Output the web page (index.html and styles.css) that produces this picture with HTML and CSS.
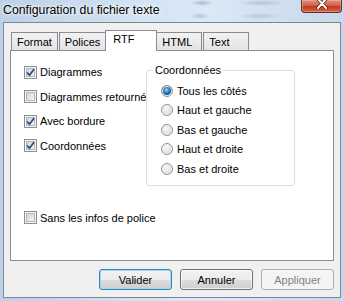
FILE: index.html
```html
<!DOCTYPE html>
<html lang="fr">
<head>
    <meta charset="UTF-8">
    <title>Configuration du fichier texte</title>
    <link rel="stylesheet" href="styles.css">
</head>
<body>
    <div class="window">
        <div class="titlebar">
            <span class="title">Configuration du fichier texte</span>
            <div class="close">
                <svg width="12" height="11" viewBox="0 0 12 11">
                    <path d="M2 1 L10 10 M10 1 L2 10" stroke="#5a1a10" stroke-width="3.4" stroke-linecap="round"/>
                    <path d="M2 1 L10 10 M10 1 L2 10" stroke="#ffffff" stroke-width="2" stroke-linecap="round"/>
                </svg>
            </div>
        </div>
        <div class="client">
            <div class="tabs">
                <div class="tab">Format</div>
                <div class="tab">Polices</div>
                <div class="tab active">RTF</div>
                <div class="tab">HTML</div>
                <div class="tab">Text</div>
            </div>
            <div class="panel">
                <div class="top">
                    <div class="checks">
                        <div class="check"><span class="box on"><svg width="9" height="9" viewBox="0 0 9 9"><path d="M1 4.5 L3.5 7.2 L8 1.3" fill="none" stroke="#2d4488" stroke-width="1.7"/></svg></span>Diagrammes</div>
                        <div class="check"><span class="box"></span>Diagrammes retournés</div>
                        <div class="check"><span class="box on"><svg width="9" height="9" viewBox="0 0 9 9"><path d="M1 4.5 L3.5 7.2 L8 1.3" fill="none" stroke="#2d4488" stroke-width="1.7"/></svg></span>Avec bordure</div>
                        <div class="check"><span class="box on"><svg width="9" height="9" viewBox="0 0 9 9"><path d="M1 4.5 L3.5 7.2 L8 1.3" fill="none" stroke="#2d4488" stroke-width="1.7"/></svg></span>Coordonnées</div>
                    </div>
                    <fieldset class="group">
                        <legend>Coordonnées</legend>
                        <div class="radio"><span class="dot on"></span>Tous les côtés</div>
                        <div class="radio"><span class="dot"></span>Haut et gauche</div>
                        <div class="radio"><span class="dot"></span>Bas et gauche</div>
                        <div class="radio"><span class="dot"></span>Haut et droite</div>
                        <div class="radio"><span class="dot"></span>Bas et droite</div>
                    </fieldset>
                </div>
                <div class="check solo"><span class="box"></span>Sans les infos de police</div>
            </div>
            <div class="buttons">
                <button class="btn default">Valider</button>
                <button class="btn">Annuler</button>
                <button class="btn" disabled>Appliquer</button>
            </div>
        </div>
    </div>
</body>
</html>
```

FILE: styles.css
```css
html, body {
    margin: 0;
    padding: 0;
}
body {
    width: 344px;
    height: 301px;
    overflow: hidden;
    font-family: "Liberation Sans", Arial, sans-serif;
    font-size: 11px;
    color: #000;
}
.window {
    width: 344px;
    height: 301px;
    box-sizing: border-box;
    background:
        radial-gradient(ellipse 12px 3px at 202px 3px, rgba(110,125,145,.45), transparent),
        radial-gradient(ellipse 10px 3px at 200px 16px, rgba(110,125,145,.35), transparent),
        radial-gradient(ellipse 24px 3px at 262px 3px, rgba(120,135,155,.35), transparent),
        radial-gradient(ellipse 22px 3px at 260px 16px, rgba(120,135,155,.3), transparent),
        linear-gradient(90deg, #bcd0e6 0%, #d3e3f4 40%, #dbe8f6 60%, #c6d8ec 100%);
}
.titlebar {
    height: 22px;
    display: flex;
}
.title {
    padding: 3px 0 0 3px;
    font-size: 12.3px;
    line-height: 14px;
    text-shadow: 0 0 6px #fff, 0 0 3px #fff;
}
.close {
    margin-left: auto;
    margin-right: 2px;
    width: 41px;
    height: 13px;
    box-sizing: border-box;
    border: 1px solid #6e2c22;
    border-top: none;
    border-radius: 0 0 4px 4px;
    background: linear-gradient(#dd9583 0%, #d0614a 45%, #c1381f 55%, #d46a4e 100%);
    box-shadow: inset 0 0 0 1px rgba(255,200,190,.35);
    display: flex;
    justify-content: center;
    align-items: flex-start;
    overflow: hidden;
}
.close svg {
    margin-top: -2px;
}
.client {
    margin: 0 3px;
    height: 276px;
    box-sizing: border-box;
    border: 1px solid #7d8792;
    background: #f0f0f0;
    padding: 0 6px;
}
.tabs {
    display: flex;
    align-items: flex-end;
    height: 20px;
    padding: 7px 0 0 1px;
}
.tab {
    height: 18px;
    min-width: 46px;
    box-sizing: border-box;
    padding: 2px 5px 0 5px;
    border: 1px solid #898c95;
    border-bottom: none;
    margin-right: 1px;
    background: linear-gradient(#f2f2f2, #e4e4e4);
    line-height: 15px;
}
.tab.active {
    height: 21px;
    min-width: 52px;
    margin: 0 -1px -1px -2px;
    padding: 1px 6px 0 7px;
    background: #fff;
    position: relative;
    z-index: 1;
}
.panel {
    height: 211px;
    box-sizing: border-box;
    border: 1px solid #898c95;
    background: #fff;
    padding: 0 0 0 13px;
}
.top {
    display: flex;
    align-items: flex-start;
}
.checks {
    width: 122px;
    margin-top: 9px;
    overflow: hidden;
}
.check {
    height: 24.5px;
    display: flex;
    align-items: center;
    white-space: nowrap;
}
.box {
    width: 13px;
    height: 13px;
    flex: none;
    box-sizing: border-box;
    border: 1px solid #8e8f8f;
    padding: 1px;
    margin-right: 3px;
    background: #f4f4f4;
    position: relative;
}
.box::before {
    content: "";
    position: absolute;
    left: 1px;
    top: 1px;
    width: 9px;
    height: 9px;
    box-sizing: border-box;
    border: 1px solid #b5b9be;
    background: linear-gradient(135deg, #d0d3d8, #f5f5f6);
}
.box svg {
    position: absolute;
    left: 1px;
    top: 1px;
}
.group {
    margin: 11px 0 0 0;
    width: 149px;
    box-sizing: border-box;
    border: 1px solid #d5dfe5;
    border-radius: 3px;
    padding: 3px 0 6px 0;
    min-inline-size: 0;
}
.group legend {
    margin-left: 6px;
    padding: 0 2px;
    line-height: 16px;
}
.radio {
    height: 19.5px;
    display: flex;
    align-items: center;
    padding-left: 14px;
    white-space: nowrap;
}
.dot {
    width: 12px;
    height: 12px;
    flex: none;
    box-sizing: border-box;
    border-radius: 50%;
    border: 1px solid #8f9294;
    margin-right: 4px;
    background: radial-gradient(circle at 40% 35%, #f7f7f7 0%, #e2e3e4 55%, #c9cbcd 100%);
    box-shadow: inset 0 0 0 1px #f3f3f3;
}
.dot.on {
    background: radial-gradient(circle at 45% 40%, #9fdcff 0%, #2b7fc4 35%, #0c3f7a 62%, #e9eaeb 66%, #dadbdc 100%);
}
.solo {
    margin-top: 20px;
}
.buttons {
    display: flex;
    justify-content: flex-end;
    gap: 8px;
    margin-top: 8px;
}
.btn {
    width: 73px;
    height: 21px;
    padding: 0;
    font-family: inherit;
    font-size: 11px;
    color: #000;
    border: 1px solid #707070;
    border-radius: 3px;
    background: linear-gradient(#f2f2f2 0%, #ebebeb 50%, #dddddd 50%, #cfcfcf 100%);
    box-shadow: inset 0 0 0 1px rgba(255,255,255,.7);
}
.btn.default {
    border-color: #3c7fb1;
    box-shadow: inset 0 0 0 1px #9edcf5;
}
.btn:disabled {
    color: #838383;
    border-color: #adb2b5;
    background: #f4f4f4;
    box-shadow: none;
}
```
